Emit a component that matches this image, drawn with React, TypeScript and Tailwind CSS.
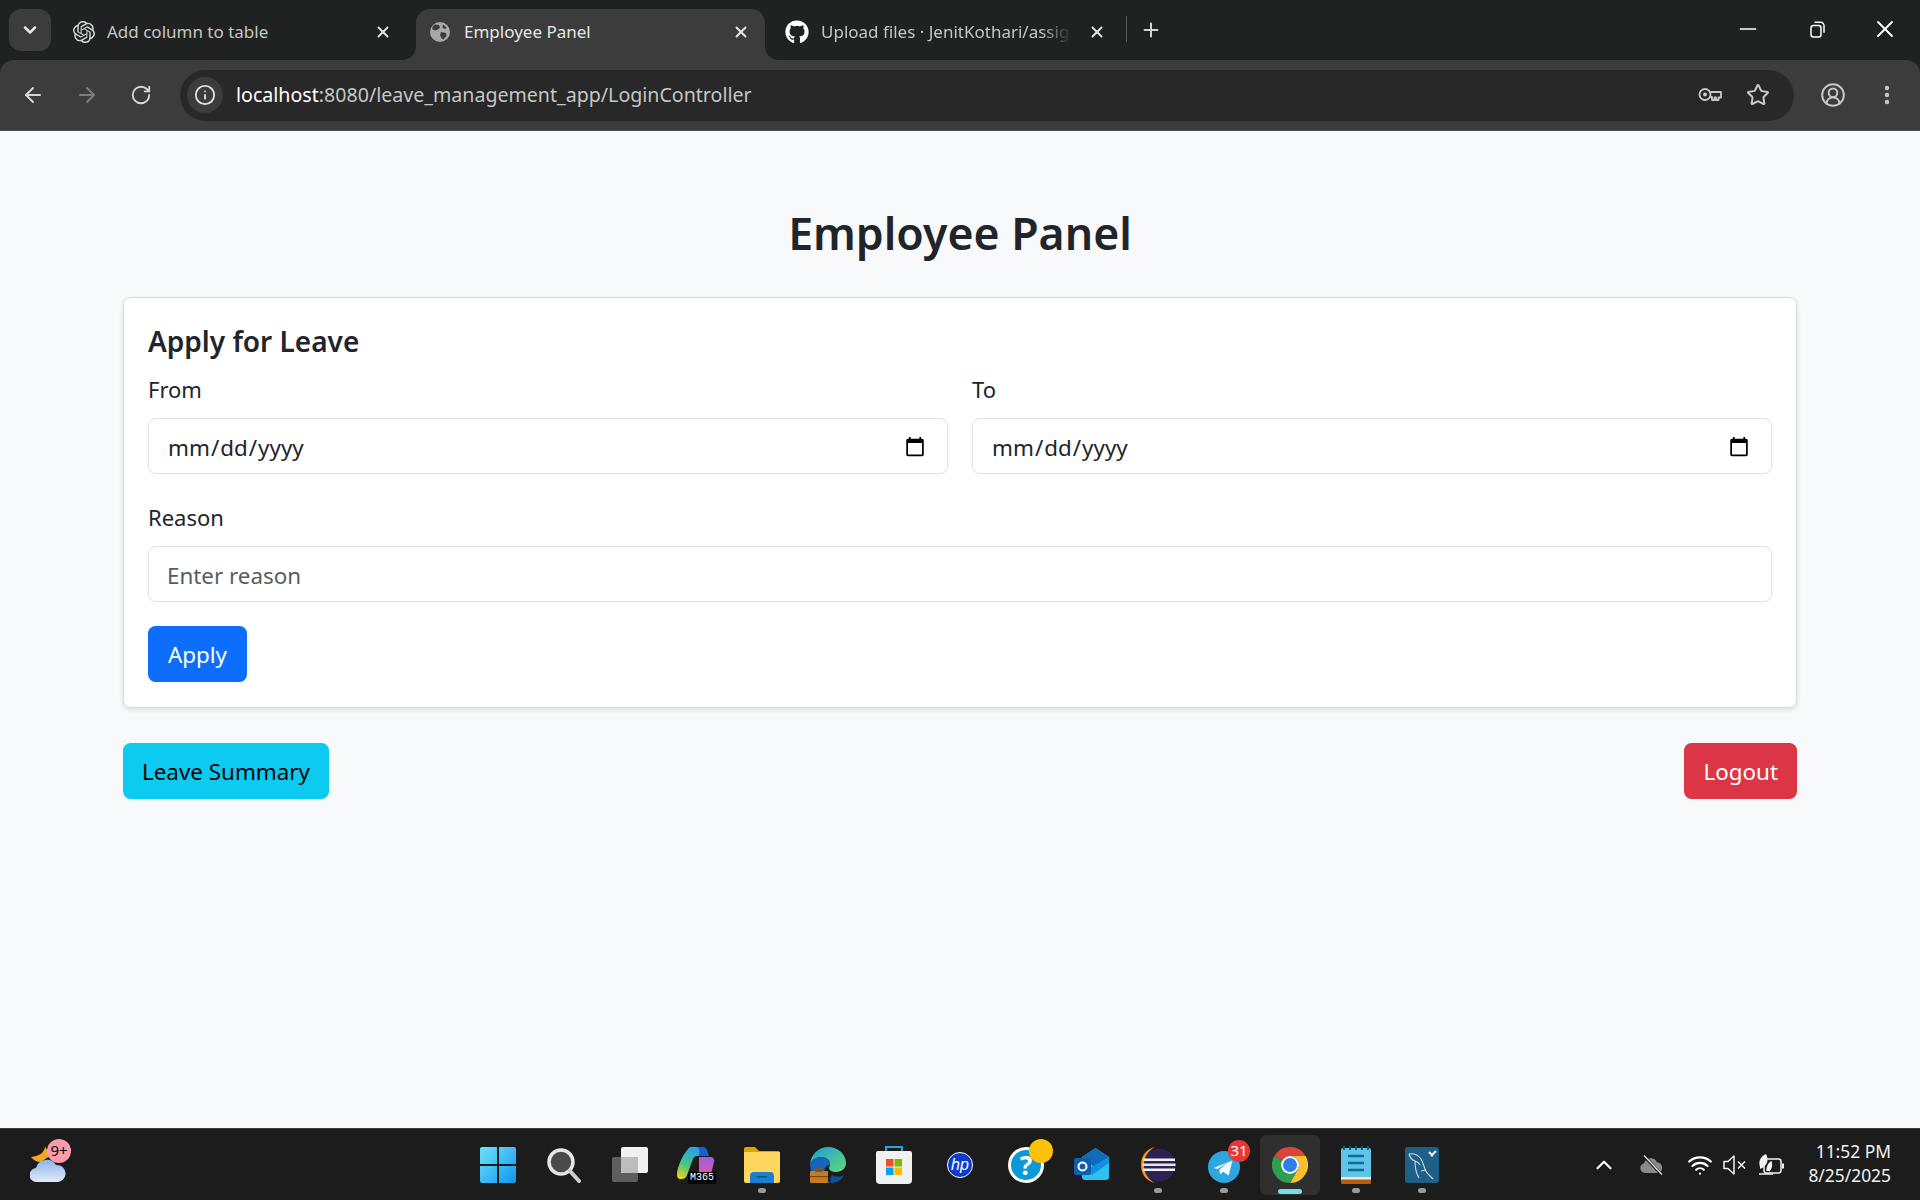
import { ArrowLeft, ArrowRight, ChevronDown, ChevronUp, CircleUserRound, EllipsisVertical, Info, Minus, Plus, RotateCw, Star, Wifi, X } from "lucide-react";
import { FaGithub } from "react-icons/fa";
import { SiOpenai } from "react-icons/si";
import type { ReactNode } from "react";

const uiFont = "font-['Noto_Sans','Open_Sans',sans-serif]";

function GlobeIcon() {
  return (
    <svg width="20" height="20" viewBox="0 0 20 20">
      <circle cx="10" cy="10" r="10" fill="#a6a8aa" />
      <path d="M5 2.500l4 .5 1 2.500-2 2-3 1-3-1.500 1-3zM11 10l5 1 .5 2.500-3 4-2-1-1.500-3.500zM13 2.500l4 3.500-2.500 1-2-1.500z" fill="#3c3c3c" />
    </svg>
  );
}

function KeyIcon() {
  return (
    <svg width="24" height="24" viewBox="0 0 24 24" fill="none" stroke="#c8c8c8" strokeWidth="1.800" className="mr-[24px] ml-auto">
      <circle cx="7" cy="11.500" r="5.500" />
      <circle cx="7" cy="11.500" r="2" fill="#c8c8c8" stroke="none" />
      <path d="M12 9h11v5.500h-2.500V17h-2.500v-2.500h-1.500V17H14v-3h-2" strokeLinejoin="round" />
    </svg>
  );
}

function TopBar() {
  return (
    <div className="bg-[#202222] shrink-0">
      <div className="flex items-end h-[60px] pl-[9px]">
        <div className="flex items-center justify-center w-[42px] h-[42px] mb-[9px] rounded-[12px] bg-[#3c3c3c]">
          <ChevronDown size={20} strokeWidth={3} className="text-[#e6e6e6]" />
        </div>
        <div className="ml-[6px] w-[359px] flex items-center h-[51px] pb-[5px] pl-[16px] pr-[24px] text-[#c4c7c5]">
          <SiOpenai size={22} className="shrink-0 text-[#d8d8d8]" />
          <span className="ml-[12px] flex-1 whitespace-nowrap text-[17px]">Add column to table</span>
          <X size={18} strokeWidth={2.5} className="shrink-0 text-[#e4e4e4]" />
        </div>
        <div className="relative flex items-center h-[51px] w-[349px] pb-[5px] pl-[14px] pr-[15px] rounded-t-[14px] bg-[#3c3c3c] text-[#e6e6e6]">
          <svg width="14" height="14" viewBox="0 0 14 14" className="absolute left-[-14px] bottom-0">
            <path d="M14 0v14H0c8 0 14-6 14-14z" fill="#3c3c3c" />
          </svg>
          <span className="w-[20px] flex justify-center shrink-0"><GlobeIcon /></span>
          <span className="ml-[14px] flex-1 whitespace-nowrap text-[17px]">Employee Panel</span>
          <X size={18} strokeWidth={2.5} className="shrink-0 text-[#e4e4e4]" />
          <svg width="14" height="14" viewBox="0 0 14 14" className="absolute right-[-14px] bottom-0">
            <path d="M0 0v14h14C6 14 0 8 0 0z" fill="#3c3c3c" />
          </svg>
        </div>
        <div className="ml-[20px] w-[321px] flex items-center h-[51px] pb-[5px] text-[#c4c7c5]">
          <FaGithub size={24} className="shrink-0 text-white" />
          <span className="ml-[12px] w-[250px] overflow-hidden whitespace-nowrap text-[17px] [mask-image:linear-gradient(to_right,black_88%,transparent)]">Upload files · JenitKothari/assignment</span>
          <X size={18} strokeWidth={2.5} className="ml-[17px] shrink-0 text-[#e4e4e4]" />
        </div>
        <div className="self-center mt-[-2px] ml-[20px] w-px h-[26px] bg-[#5a5a5a]" />
        <Plus size={22} strokeWidth={2.2} className="self-center mt-[-1px] ml-[13px] text-[#d4d4d4]" />
        <div className="ml-auto self-center flex items-center mt-[-2px] text-white">
          <Minus size={26} strokeWidth={1.4} className="mr-[49px]" />
          <svg width="15" height="17" viewBox="0 0 15 17" fill="none" stroke="currentColor" strokeWidth="1.500" className="mr-[46px]">
            <rect x="1" y="4.500" width="10" height="11.500" rx="2.500" />
            <path d="M4.500 1.200h6a3.500 3.500 0 0 1 3.500 3.500v7" />
          </svg>
          <X size={28} strokeWidth={1.6} className="mr-[21px]" />
        </div>
      </div>
      <div className="flex items-center h-[71px] bg-[#3c3c3c] rounded-t-[14px] border-b border-[#4c4c4c]">
        <ArrowLeft size={24} strokeWidth={2} className="ml-[21px] text-[#d8d8d8]" />
        <ArrowRight size={24} strokeWidth={2} className="ml-[30px] text-[#7d7d7d]" />
        <RotateCw size={22} strokeWidth={2} className="ml-[31px] text-[#d8d8d8]" />
        <div className="ml-[28px] flex-1 flex items-center h-[51px] rounded-full bg-[#282828]">
          <div className="ml-[7px] flex items-center justify-center w-[36px] h-[36px] rounded-full bg-[#3c3c3c]">
            <Info size={22} strokeWidth={2} className="text-[#e0e0e0]" />
          </div>
          <span className="ml-[13px] text-[19.6px] text-white">
            localhost<span className="text-[#c4c7c5]">:8080/leave_management_app/LoginController</span>
          </span>
          <KeyIcon />
          <Star size={24} strokeWidth={2} className="mr-[24px] text-[#c8c8c8]" />
        </div>
        <CircleUserRound size={26} strokeWidth={1.8} className="ml-[26px] text-[#c8c8c8]" />
        <EllipsisVertical size={24} strokeWidth={2.4} className="ml-[29px] mr-[21px] text-[#c8c8c8]" />
      </div>
    </div>
  );
}

function Field({ label, children }: { label: string; children: ReactNode }) {
  return (
    <div className="flex-1 min-w-0">
      <label className="block h-[30px] leading-[22px] mb-[10px] text-[22px] text-[#212529]">{label}</label>
      {children}
    </div>
  );
}

const inputClass =
  "block w-full h-[56px] pl-[18px] pr-[19px] pt-[3px] text-[22.4px] text-[#212529] bg-white border border-[#dee2e6] rounded-[7.5px] outline-none placeholder:text-[#595c5f]";

function MainPanel() {
  return (
    <main className="flex-1 min-h-0 bg-[#f8f9fa] px-[123px] pt-[78px]">
      <h2 className="h-[48px] leading-[48px] mb-[40px] text-center text-[44.6px] font-semibold text-[#212529]">Employee Panel</h2>
      <div className="bg-white border border-[#d9dadb] rounded-[7.5px] shadow-[0_2px_5px_rgba(0,0,0,0.1)] px-[24px] pt-[24px] pb-[25px]">
        <h4 className="h-[36px] leading-[38px] mb-[20px] text-[28px] font-semibold text-[#212529]">Apply for Leave</h4>
        <div className="flex gap-[24px] mb-[32px]">
          <Field label="From">
            <input type="date" className={inputClass} />
          </Field>
          <Field label="To">
            <input type="date" className={inputClass} />
          </Field>
        </div>
        <Field label="Reason">
          <input type="text" placeholder="Enter reason" className={inputClass} />
        </Field>
        <button className="block mt-[24px] h-[56px] px-[20px] pt-[2px] rounded-[7.5px] bg-[#0d6efd] text-white text-[22.4px]">Apply</button>
      </div>
      <div className="flex justify-between mt-[35px]">
        <button className="h-[56px] px-[19px] pt-[2px] rounded-[7.5px] bg-[#0dcaf0] text-black text-[22.4px]">Leave Summary</button>
        <button className="h-[56px] px-[19px] pt-[2px] rounded-[7.5px] bg-[#dc3545] text-white text-[22.4px]">Logout</button>
      </div>
    </main>
  );
}

function WeatherIcon() {
  return (
    <div className="relative w-[44px] h-[44px]">
      <svg width="36" height="36" viewBox="0 0 36 36" className="absolute left-0 top-[3px]">
        <defs>
          <linearGradient id="wcloud" x1="0" y1="0" x2="0" y2="1">
            <stop offset="0" stopColor="#8fb4e8" />
            <stop offset="1" stopColor="#dfeafa" />
          </linearGradient>
        </defs>
        <path d="M15 0c0 6-5 10-14 11 2 3 6 5 10 5l13-9c-4 0-8-3-9-7z" fill="#f5a623" />
        <path d="M7 36a7 7 0 0 1-1-14 11 11 0 0 1 20-3 8.500 8.500 0 0 1 2 17z" fill="url(#wcloud)" />
      </svg>
      <span className="absolute left-[17px] top-[-4px] flex items-center justify-center w-[24px] h-[24px] rounded-full bg-[#ff9aa8] text-[15px] text-black">9+</span>
    </div>
  );
}

function Slot({ children, dot, active }: { children: ReactNode; dot?: "app" | "on"; active?: boolean }) {
  return (
    <div className={`relative flex items-center justify-center w-[60px] h-[60px] mx-[3px] rounded-[6px] ${active ? "bg-[#2f2f2f]" : ""}`}>
      {children}
      {dot === "on" && <span className="absolute bottom-[1px] left-[18px] w-[24px] h-[5px] rounded-full bg-[#76dce4]" />}
      {dot === "app" && <span className="absolute bottom-[2px] left-[26px] w-[8px] h-[5px] rounded-full bg-[#9a9a9a]" />}
    </div>
  );
}

function StartIcon() {
  return (
    <svg width="36" height="36" viewBox="0 0 36 36">
      <defs>
        <linearGradient id="winl" x1="0" y1="0" x2="1" y2="1">
          <stop offset="0" stopColor="#6fe3fb" />
          <stop offset="1" stopColor="#0f95f0" />
        </linearGradient>
      </defs>
      <path d="M2 0h15v17H0V2a2 2 0 0 1 2-2zM19 0h15a2 2 0 0 1 2 2v15H19zM0 19h17v17H2a2 2 0 0 1-2-2zM19 19h17v15a2 2 0 0 1-2 2H19z" fill="url(#winl)" />
    </svg>
  );
}

function SearchIcon() {
  return (
    <svg width="36" height="36" viewBox="0 0 36 36" fill="none">
      <circle cx="15" cy="15" r="12" fill="#4a4a4a" stroke="#e6e6e6" strokeWidth="3.500" />
      <path d="M24 24l9 10" stroke="#d0d0d0" strokeWidth="4" strokeLinecap="round" />
    </svg>
  );
}

function TaskViewIcon() {
  return (
    <svg width="36" height="36" viewBox="0 0 36 36">
      <rect x="0" y="10" width="26" height="25" rx="2" fill="#5e5e5e" />
      <rect x="9" y="0" width="27" height="26" rx="2" fill="#f1f1f1" />
      <rect x="9" y="10" width="17" height="16" fill="#bdbdbd" />
    </svg>
  );
}

function M365Icon() {
  return (
    <div className="relative w-[38px] h-[36px]">
      <svg width="38" height="33" viewBox="0 0 38 33">
        <defs>
          <linearGradient id="cop1" x1="0.6" y1="0" x2="0.2" y2="1">
            <stop offset="0" stopColor="#2a9df0" />
            <stop offset="0.55" stopColor="#3fc58a" />
            <stop offset="1" stopColor="#e8d31f" />
          </linearGradient>
          <linearGradient id="cop2" x1="0.6" y1="0" x2="0.4" y2="1">
            <stop offset="0" stopColor="#9c5fe6" />
            <stop offset="1" stopColor="#f4548a" />
          </linearGradient>
        </defs>
        <path d="M11 2C12 .5 13 0 15 0h11l4 9H20c-2 0-3 1-4 3L10 28c-1 3-3 4-5 4H3c-2 0-3-2-3-4 0-6 4-18 11-26z" fill="url(#cop1)" />
        <path d="M21 0h5c2 0 3 1 4 3l2 6H21c2-2 2-6 0-9z" fill="#1a5fd6" />
        <path d="M22 10h11c3 0 5 2 4 5l-3 12c-1 3-2 5-5 5H17c3 0 4-2 5-4z" fill="url(#cop2)" />
      </svg>
      <span className="absolute right-[-1px] bottom-[-1px] px-[2px] bg-black text-white rounded-[2px] text-[10px] leading-[12px] font-['Liberation_Mono',monospace]">M365</span>
    </div>
  );
}

function FolderIcon() {
  return (
    <svg width="36" height="36" viewBox="0 0 36 36">
      <path d="M0 2a2 2 0 0 1 2-2h9l4 4h19a2 2 0 0 1 2 2v4H0z" fill="#e0a100" />
      <path d="M0 5h36v29a2 2 0 0 1-2 2H2a2 2 0 0 1-2-2z" fill="#ffd75e" />
      <path d="M6 36v-7a4 4 0 0 1 4-4h16a4 4 0 0 1 4 4v7z" fill="#1a7fd0" />
      <rect x="13" y="29" width="10" height="1.500" fill="#0c4f8c" />
    </svg>
  );
}

function EdgeIcon() {
  return (
    <svg width="36" height="36" viewBox="0 0 36 36">
      <defs>
        <linearGradient id="edge1" x1="0" y1="0" x2="1" y2="1">
          <stop offset="0" stopColor="#1f9be0" />
          <stop offset="1" stopColor="#5fdc6e" />
        </linearGradient>
      </defs>
      <path d="M18 0c11 0 18 8 18 16 0 6-5 9-10 9-4 0-7-2-7-4 0-1 1-2 1-4 0-4-4-7-9-7S2 13 0 17C1 7 9 0 18 0z" fill="url(#edge1)" />
      <path d="M0 17c2-5 6-7 11-7 6 0 9 4 9 8-3 0-6 3-6 8 0 4 3 8 7 10H16C7 36 0 28 0 17z" fill="#1566b8" />
      <path d="M21 36c5 0 10-2 13-8-4 2-9 2-12 0-2 3-2 6-1 8z" fill="#0f4f96" />
      <rect x="0" y="24" width="18" height="12" rx="1" fill="#c97a1c" />
      <rect x="6" y="21.500" width="6" height="3" fill="none" stroke="#8a5310" strokeWidth="1.200" />
      <rect x="0" y="29" width="18" height="1.200" fill="#7d4a0c" />
    </svg>
  );
}

function StoreIcon() {
  return (
    <svg width="36" height="38" viewBox="0 0 36 38">
      <path d="M10 6V1h16v5" fill="none" stroke="#2aa5dd" strokeWidth="2" />
      <path d="M2 5h32a2 2 0 0 1 2 2v27a4 4 0 0 1-4 4H4a4 4 0 0 1-4-4V7a2 2 0 0 1 2-2z" fill="#f1f1f1" />
      <rect x="10" y="13" width="7.500" height="7.500" fill="#f25022" />
      <rect x="18.500" y="13" width="7.500" height="7.500" fill="#7fba00" />
      <rect x="10" y="21.500" width="7.500" height="7.500" fill="#00a4ef" />
      <rect x="18.500" y="21.500" width="7.500" height="7.500" fill="#ffb900" />
    </svg>
  );
}

function HpIcon() {
  return (
    <div className="flex items-center justify-center w-[26px] h-[26px] rounded-full bg-[#0b3ccf] border border-white">
      <span className="italic text-white text-[16px] leading-none font-['Liberation_Sans',sans-serif]">hp</span>
    </div>
  );
}

function HelpIcon() {
  return (
    <div className="relative w-[36px] h-[36px] rounded-full bg-[#0b9ad6] border-[3px] border-white flex items-center justify-center">
      <span className="text-white text-[26px] leading-none font-bold">?</span>
      <span className="absolute right-[-12px] top-[-11px] w-[24px] h-[24px] rounded-full bg-[#ffc107]" />
    </div>
  );
}

function OutlookIcon() {
  return (
    <svg width="36" height="36" viewBox="0 0 36 36">
      <path d="M8 10l12-8c1-1 2-1 3 0l12 8v20a3 3 0 0 1-3 3H11a3 3 0 0 1-3-3z" fill="#2dc1ee" />
      <path d="M8 10l12-8c1-1 2-1 3 0l12 8-12 10H20z" fill="#0f6cbd" />
      <path d="M35 10v6L18 28l-4-6z" fill="#1490df" />
      <rect x="0" y="11" width="17" height="17" rx="2" fill="#0a5fb0" />
      <circle cx="8.500" cy="19.500" r="4" fill="none" stroke="#fff" strokeWidth="2" />
    </svg>
  );
}

function EclipseIcon() {
  return (
    <svg width="36" height="38" viewBox="0 0 36 38">
      <circle cx="19" cy="19" r="16.500" fill="#2c2255" />
      <path d="M15 1C6 3 1 10 1 19s5 16 14 18C8 33 4 27 4 19S8 5 15 1z" fill="#f7941e" />
      <rect x="3" y="12.500" width="32" height="2.500" fill="#f3f3f3" />
      <rect x="2.500" y="17.500" width="33" height="2.500" fill="#e6e0f0" />
      <rect x="3" y="22.500" width="32" height="2.500" fill="#f3f3f3" />
    </svg>
  );
}

function TelegramIcon() {
  return (
    <div className="relative w-[32px] h-[32px] translate-y-[2px]">
      <svg width="32" height="32" viewBox="0 0 34 34">
        <circle cx="17" cy="17" r="17" fill="#2ea6e0" />
        <path d="M6 18l20-8-4 16-6-4-3 3-1-5 8-7-10 6z" fill="#f4fbff" />
      </svg>
      <span className="absolute right-[-10px] top-[-11px] flex items-center justify-center w-[22px] h-[22px] rounded-full bg-[#e53935] text-white text-[15px] leading-none">31</span>
    </div>
  );
}

function ChromeIcon() {
  return (
    <svg width="36" height="36" viewBox="0 0 36 36">
      <path d="M2.410 9A18 18 0 0 1 33.590 9H18A9 9 0 0 0 10.200 13.500z" fill="#db4437" />
      <path d="M33.590 9A18 18 0 0 1 18 36L25.800 22.500A9 9 0 0 0 18 9z" fill="#fbc02d" />
      <path d="M18 36A18 18 0 0 1 2.410 9L10.200 13.500A9 9 0 0 0 25.800 22.500z" fill="#2e9e4f" />
      <circle cx="18" cy="18" r="9" fill="#fff" />
      <circle cx="18" cy="18" r="7" fill="#2f7de8" />
    </svg>
  );
}

function NotepadIcon() {
  return (
    <svg width="30" height="38" viewBox="0 0 30 38">
      <rect x="0" y="2" width="30" height="34" rx="2" fill="#5fc4e6" />
      <rect x="0" y="31" width="30" height="3" fill="#f1e7d6" />
      <rect x="0" y="33.500" width="30" height="4.500" rx="1" fill="#b35e14" />
      <path d="M3 0v4M9 0v4M15 0v4M21 0v4M27 0v4" stroke="#0e5f83" strokeWidth="2" />
      <path d="M7 10h16M7 17h16M7 24h16" stroke="#0e6c96" strokeWidth="2.400" />
    </svg>
  );
}

function MysqlIcon() {
  return (
    <svg width="34" height="36" viewBox="0 0 34 36">
      <rect width="34" height="36" rx="3" fill="#1f5f88" />
      <path d="M4 7c5-1 9 1 12 5 3 5 3 10 6 14l6 6M4 7c1 4 3 6 6 7 0 6 1 12 4 17M10 14c3 1 4 2 5 4M16 24l5-1" fill="none" stroke="#c9dce8" strokeWidth="1.100" />
      <path d="M26 9l5-5M24 5l4 4" stroke="#f0f0f0" strokeWidth="2" />
    </svg>
  );
}

function CloudOff() {
  return (
    <svg width="24" height="22" viewBox="0 0 24 22">
      <path d="M5 19a5 5 0 0 1-1-9.800 7 7 0 0 1 13-1 5.500 5.500 0 0 1 1 10.800z" fill="#8a8a8a" />
      <path d="M3 1l19 20" stroke="#1c1c1c" strokeWidth="3" />
      <path d="M4 1.500l18 19" stroke="#e4e4e4" strokeWidth="1.300" />
    </svg>
  );
}

function VolumeMuted() {
  return (
    <svg width="24" height="22" viewBox="0 0 24 22" fill="none" stroke="#f2f2f2" strokeWidth="1.500">
      <path d="M1 7.500h4L11 2v18l-6-5.500H1z" strokeLinejoin="round" />
      <path d="M15 7.500l7 7M22 7.500l-7 7" />
    </svg>
  );
}

function BatteryLeaf() {
  return (
    <svg width="26" height="24" viewBox="0 0 26 24" fill="none" stroke="#f2f2f2" strokeWidth="1.500">
      <rect x="6" y="6" width="17" height="14" rx="2.500" />
      <path d="M25 10.500v5" strokeWidth="2" />
      <path d="M2 14C0 8 3 3 8 1c3 5 2 12-6 15z" fill="#f2f2f2" stroke="none" />
      <path d="M1 21h14" />
      <path d="M9 18c0-4 1-7 4-9 1 4 0 7-2 9" fill="#f2f2f2" />
    </svg>
  );
}

function Taskbar() {
  return (
    <footer className="shrink-0 h-[72px] grid grid-cols-[1fr_auto_1fr] items-center bg-[#1c1c1c] border-t border-[#3e3e3e]">
      <div className="pl-[30px]">
        <WeatherIcon />
      </div>
      <div className="flex items-center">
        <Slot><StartIcon /></Slot>
        <Slot><SearchIcon /></Slot>
        <Slot><TaskViewIcon /></Slot>
        <Slot><M365Icon /></Slot>
        <Slot dot="app"><FolderIcon /></Slot>
        <Slot><EdgeIcon /></Slot>
        <Slot><StoreIcon /></Slot>
        <Slot><HpIcon /></Slot>
        <Slot><HelpIcon /></Slot>
        <Slot><OutlookIcon /></Slot>
        <Slot dot="app"><EclipseIcon /></Slot>
        <Slot dot="app"><TelegramIcon /></Slot>
        <Slot dot="on" active><ChromeIcon /></Slot>
        <Slot dot="app"><NotepadIcon /></Slot>
        <Slot dot="app"><MysqlIcon /></Slot>
      </div>
      <div className="flex items-center justify-end pr-[29px] text-white">
        <ChevronUp size={26} strokeWidth={2} className="mr-[23px]" />
        <CloudOff />
        <Wifi size={26} strokeWidth={2} className="ml-[23px]" />
        <span className="ml-[10px]"><VolumeMuted /></span>
        <span className="ml-[11px]"><BatteryLeaf /></span>
        <div className="ml-[24px] mt-[-3px] text-right text-[17.4px] leading-[24px] text-[#f2f2f2]">
          <div>11:52 PM</div>
          <div>8/25/2025</div>
        </div>
      </div>
    </footer>
  );
}

export default function App() {
  return (
    <div className={`flex flex-col h-screen overflow-hidden ${uiFont}`}>
      <TopBar />
      <MainPanel />
      <Taskbar />
    </div>
  );
}
